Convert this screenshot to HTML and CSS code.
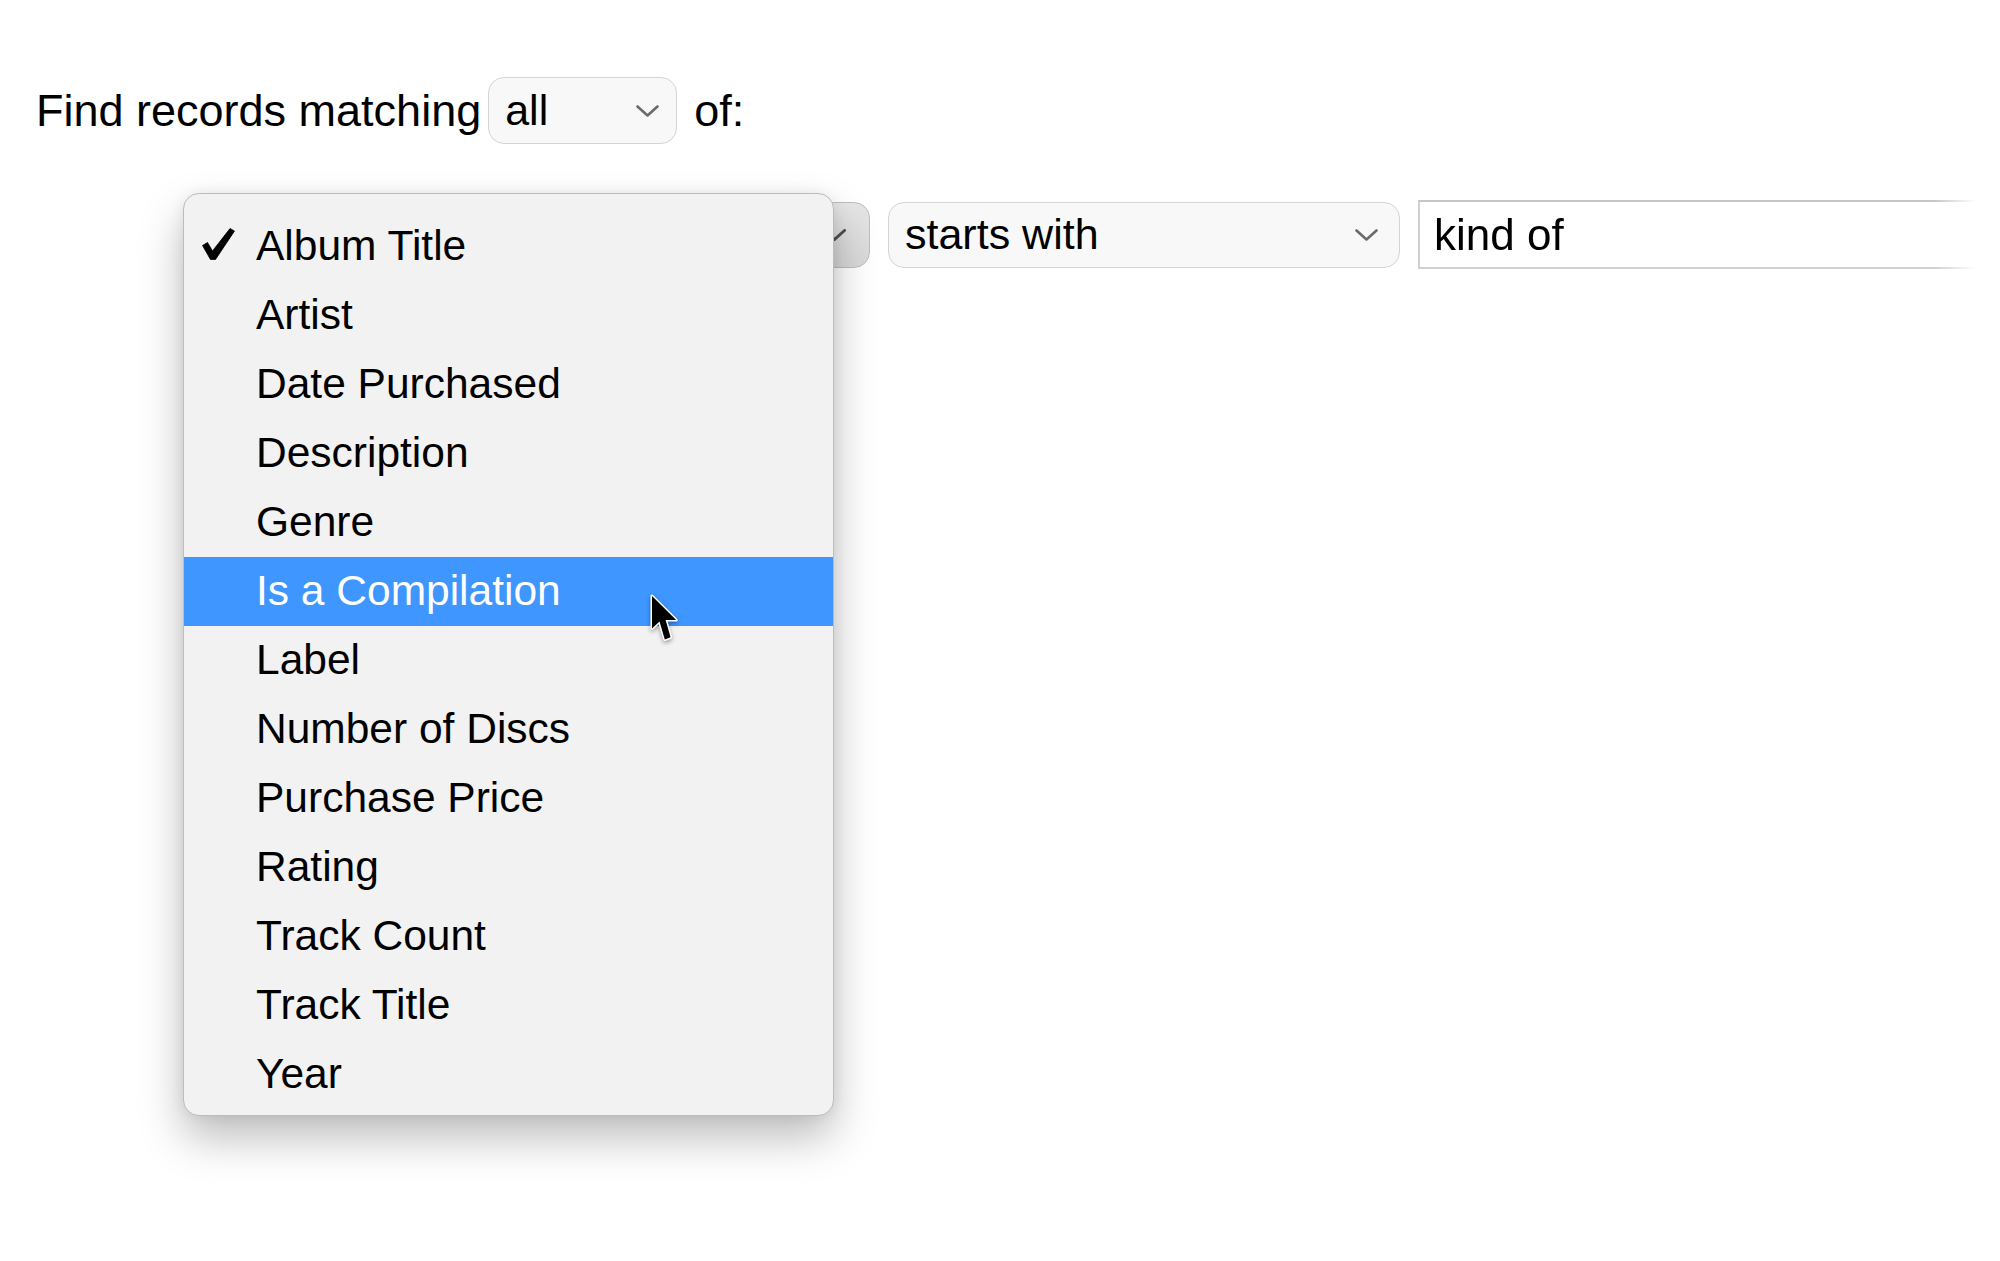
FILE: index.html
```html
<!DOCTYPE html>
<html lang="en">
<head>
<meta charset="utf-8">
<title>Find records</title>
<link rel="stylesheet" href="styles.css">
</head>
<body>
<div class="page">
  <div class="header">
    <span class="lead">Find records matching</span>
    <div class="select select-all">
      <span class="select-text">all</span>
      <svg class="chev" width="23" height="12" viewBox="0 0 23 12"><path d="M1.5 1.5 L11.5 10.5 L21.5 1.5"/></svg>
    </div>
    <span class="tail">of:</span>
  </div>

  <div class="rule">
    <div class="select select-field">
      <span class="select-text"></span>
      <svg class="chev chev-dark" width="23" height="12" viewBox="0 0 23 12"><path d="M1.5 1.5 L11.5 10.5 L21.5 1.5"/></svg>
    </div>
    <div class="select select-op">
      <span class="select-text">starts with</span>
      <svg class="chev" width="23" height="12" viewBox="0 0 23 12"><path d="M1.5 1.5 L11.5 10.5 L21.5 1.5"/></svg>
    </div>
    <div class="input">kind of</div>
  </div>

  <ul class="menu">
    <li class="item checked">
      <span class="mark"><svg width="34" height="34" viewBox="0 0 34 34"><path d="M1.5 18.5 L6.5 15.5 L11.5 24 L29 1.5 L33.5 4 L14.5 32.5 L9.5 32.5 Z"/></svg></span>
      <span class="label">Album Title</span>
    </li>
    <li class="item"><span class="mark"></span><span class="label">Artist</span></li>
    <li class="item"><span class="mark"></span><span class="label">Date Purchased</span></li>
    <li class="item"><span class="mark"></span><span class="label">Description</span></li>
    <li class="item"><span class="mark"></span><span class="label">Genre</span></li>
    <li class="item active"><span class="mark"></span><span class="label">Is a Compilation</span></li>
    <li class="item"><span class="mark"></span><span class="label">Label</span></li>
    <li class="item"><span class="mark"></span><span class="label">Number of Discs</span></li>
    <li class="item"><span class="mark"></span><span class="label">Purchase Price</span></li>
    <li class="item"><span class="mark"></span><span class="label">Rating</span></li>
    <li class="item"><span class="mark"></span><span class="label">Track Count</span></li>
    <li class="item"><span class="mark"></span><span class="label">Track Title</span></li>
    <li class="item"><span class="mark"></span><span class="label">Year</span></li>
  </ul>

  <svg class="cursor" width="40" height="58" viewBox="0 0 40 58">
    <path d="M5 4 L5 36.5 L12.5 29.5 L17.8 47.5 L23.6 45.3 L18.6 28 L29.2 28 Z"/>
  </svg>
</div>
</body>
</html>
```

FILE: styles.css
```css
html, body {
  margin: 0;
  padding: 0;
  background: #ffffff;
}

body {
  font-family: "Liberation Sans", Arial, sans-serif;
  color: #000000;
}

.page {
  position: relative;
  width: 2000px;
  height: 1261px;
  padding-top: 77px;
  box-sizing: border-box;
  overflow: hidden;
}

/* header line */
.header {
  display: flex;
  align-items: center;
  height: 67px;
  padding-left: 36px;
  font-size: 45px;
}

.lead {
  white-space: nowrap;
}

.tail {
  margin-left: 17px;
}

/* generic popup button */
.select {
  display: flex;
  align-items: center;
  justify-content: space-between;
  box-sizing: border-box;
  height: 66px;
  border: 1.5px solid #d4d4d4;
  border-radius: 16px;
  background: #f8f8f8;
  font-size: 43px;
  white-space: nowrap;
}

.chev {
  flex: none;
}

.chev path {
  fill: none;
  stroke: #6b6b6b;
  stroke-width: 2.6;
  stroke-linecap: round;
  stroke-linejoin: round;
}

.chev-dark path {
  stroke: #4f4f4f;
  stroke-width: 3;
}

.select-all {
  width: 189px;
  height: 67px;
  margin-left: 7px;
  padding: 0 17px 0 16px;
}

/* rule row */
.rule {
  display: flex;
  align-items: center;
  gap: 18px;
  margin-top: 56px;
  padding-left: 185px;
}

.select-field {
  width: 685px;
  padding: 0 23px 0 16px;
  background: linear-gradient(#e6e6e6, #d8d8d8);
  border-color: #bdbdbd;
}

.select-op {
  width: 512px;
  padding: 0 21px 0 16px;
}

.input {
  box-sizing: border-box;
  width: 562px;
  height: 69px;
  display: flex;
  align-items: center;
  padding-left: 14px;
  border: 2px solid #d0d0d0;
  border-top-color: #c6c6c6;
  background: #ffffff;
  font-size: 44px;
  -webkit-mask-image: linear-gradient(to right, #000 calc(100% - 46px), transparent calc(100% - 4px));
  mask-image: linear-gradient(to right, #000 calc(100% - 46px), transparent calc(100% - 4px));
}

/* open popup menu */
.menu {
  position: absolute;
  left: 183px;
  top: 193px;
  width: 651px;
  box-sizing: border-box;
  margin: 0;
  padding: 18px 0 6px 0;
  list-style: none;
  background: #f2f2f2;
  border: 1px solid #bcbcbc;
  border-radius: 16px;
  box-shadow: 0 22px 44px rgba(0, 0, 0, 0.26), 0 0 14px rgba(0, 0, 0, 0.07);
  font-size: 42.5px;
  z-index: 5;
}

.item {
  display: flex;
  align-items: center;
  height: 69px;
  white-space: nowrap;
}

.label {
  margin-top: -2px;
}

.mark {
  flex: none;
  width: 72px;
  box-sizing: border-box;
  padding-left: 17px;
  display: flex;
  align-items: center;
}

.mark svg {
  margin-top: -5px;
}

.mark svg path {
  fill: #000000;
  stroke: #000000;
  stroke-width: 0.8;
  stroke-linejoin: round;
}

.item.active {
  background: #3e96fe;
  color: #ffffff;
}

/* mouse pointer */
.cursor {
  position: absolute;
  left: 647px;
  top: 592px;
  z-index: 10;
  filter: drop-shadow(0 2px 2px rgba(0, 0, 0, 0.35));
}

.cursor path {
  fill: #000000;
  stroke: #ffffff;
  stroke-width: 3;
  stroke-linejoin: round;
  paint-order: stroke;
}
```
